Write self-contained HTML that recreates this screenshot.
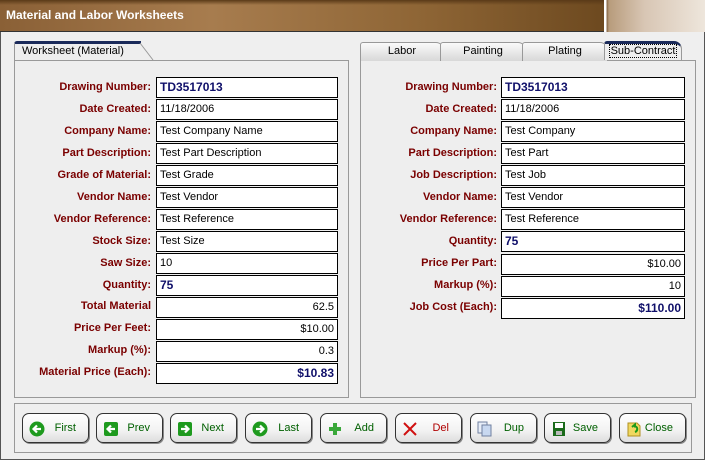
<!DOCTYPE html><html><head><style>
*{margin:0;padding:0;box-sizing:border-box}
body{width:705px;height:460px;overflow:hidden;background:#efefef;font-family:"Liberation Sans",sans-serif;font-size:11px;position:relative}
.win{position:absolute;left:0;top:0;width:705px;height:460px;border:1px solid #555;border-top:none}
.title{position:absolute;left:0;top:0;width:705px;height:32px;background:linear-gradient(90deg,#8a6036 0%,#a77c4e 30%,#8e6535 60%,#6e4a20 85%);border-bottom:1px solid #333}
.title:before{content:"";position:absolute;left:0;top:0;right:0;height:5px;background:linear-gradient(#5a3a18,rgba(0,0,0,0))}
.title .r{position:absolute;left:604px;top:0;width:101px;height:32px;background:linear-gradient(90deg,#fff 0,#fff 2px,#8a6a48 3px,#b89c7c 5px,#d8c6b4 40%,#eee6dc 100%)}
.title span{position:absolute;left:6px;top:8px;color:#fff;font-weight:bold;font-size:12px}
.panel{position:absolute;border:1px solid #999;background:#eeeeee}
.tab{position:absolute;height:19px;border:1px solid #999;border-bottom:none;background:linear-gradient(#fafafa,#d8d8d8);text-align:center;line-height:17px;font-size:11px;border-radius:3px 8px 0 0;white-space:nowrap}
.tab.a{background:#eee;border-top:3px solid #1a2a5a;line-height:14px}
.lbl{position:absolute;text-align:right;color:#7a0000;font-weight:bold;font-size:11px;line-height:20px}
.in{position:absolute;height:21px;border:1px solid #000;background:#fff;padding:0 3px;line-height:19px;font-size:11px;white-space:nowrap}
.in.b{color:#10106a;font-weight:bold;font-size:12px}
.in.r{text-align:right}
.btnbox{position:absolute;left:14px;top:403px;width:678px;height:50px;border:1px solid #999}
.btn{position:absolute;top:413px;width:67px;height:30px;border:1px solid #333;border-radius:7px;background:linear-gradient(#fff,#f2f2f2 60%,#ddd);box-shadow:1px 1px 0 #888;color:#006000;font-size:11px;line-height:28px}
.btn i{position:absolute;left:6px;top:6px;width:16px;height:16px}
.btn b{font-weight:normal;position:absolute;right:12px}
</style></head><body>
<div class="win"></div>
<div class="title"><div class="r"></div><span>Material and Labor Worksheets</span></div>

<div class="panel" style="left:14px;top:60px;width:335px;height:338px"></div>
<div class="tab a" style="left:14px;top:41px;width:126px;text-align:left;padding-left:7px;border-radius:3px 0 0 0;border-right:none">Worksheet (Material)</div>
<svg style="position:absolute;left:138px;top:41px" width="16" height="20"><path d="M0 2 L2 2 L15 19 L0 19Z" fill="#eee"/><path d="M0 1.5 L3 1.5" stroke="#1a2a5a" stroke-width="3"/><path d="M2 2 L15 19" stroke="#999" fill="none"/></svg>

<div class="panel" style="left:360px;top:60px;width:336px;height:338px"></div>
<div class="tab" style="left:360px;top:42px;width:84px">Labor</div>
<div class="tab" style="left:440px;top:42px;width:86px">Painting</div>
<div class="tab" style="left:522px;top:42px;width:86px">Plating</div>
<div class="tab a" style="left:604px;top:41px;width:78px"><span style="border:1px dotted #000;padding:0 1px">Sub-Contract</span></div>

<div class="lbl" style="left:20px;width:131px;top:77px">Drawing Number:</div><div class="in b" style="left:156px;top:77px;width:182px">TD3517013</div>
<div class="lbl" style="left:20px;width:131px;top:99px">Date Created:</div><div class="in" style="left:156px;top:99px;width:182px">11/18/2006</div>
<div class="lbl" style="left:20px;width:131px;top:121px">Company Name:</div><div class="in" style="left:156px;top:121px;width:182px">Test Company Name</div>
<div class="lbl" style="left:20px;width:131px;top:143px">Part Description:</div><div class="in" style="left:156px;top:143px;width:182px">Test Part Description</div>
<div class="lbl" style="left:20px;width:131px;top:165px">Grade of Material:</div><div class="in" style="left:156px;top:165px;width:182px">Test Grade</div>
<div class="lbl" style="left:20px;width:131px;top:187px">Vendor Name:</div><div class="in" style="left:156px;top:187px;width:182px">Test Vendor</div>
<div class="lbl" style="left:20px;width:131px;top:209px">Vendor Reference:</div><div class="in" style="left:156px;top:209px;width:182px">Test Reference</div>
<div class="lbl" style="left:20px;width:131px;top:231px">Stock Size:</div><div class="in" style="left:156px;top:231px;width:182px">Test Size</div>
<div class="lbl" style="left:20px;width:131px;top:253px">Saw Size:</div><div class="in" style="left:156px;top:253px;width:182px">10</div>
<div class="lbl" style="left:20px;width:131px;top:275px">Quantity:</div><div class="in b" style="left:156px;top:275px;width:182px">75</div>
<div class="lbl" style="left:20px;width:131px;top:296px">Total Material</div><div class="in r" style="left:156px;top:297px;width:182px">62.5</div>
<div class="lbl" style="left:20px;width:131px;top:318px">Price Per Feet:</div><div class="in r" style="left:156px;top:319px;width:182px">$10.00</div>
<div class="lbl" style="left:20px;width:131px;top:340px">Markup (%):</div><div class="in r" style="left:156px;top:341px;width:182px">0.3</div>
<div class="lbl" style="left:20px;width:131px;top:362px">Material Price (Each):</div><div class="in r b" style="left:156px;top:363px;width:182px">$10.83</div>

<div class="lbl" style="left:366px;width:131px;top:77px">Drawing Number:</div><div class="in b" style="left:501px;top:77px;width:184px">TD3517013</div>
<div class="lbl" style="left:366px;width:131px;top:99px">Date Created:</div><div class="in" style="left:501px;top:99px;width:184px">11/18/2006</div>
<div class="lbl" style="left:366px;width:131px;top:121px">Company Name:</div><div class="in" style="left:501px;top:121px;width:184px">Test Company</div>
<div class="lbl" style="left:366px;width:131px;top:143px">Part Description:</div><div class="in" style="left:501px;top:143px;width:184px">Test Part</div>
<div class="lbl" style="left:366px;width:131px;top:165px">Job Description:</div><div class="in" style="left:501px;top:165px;width:184px">Test Job</div>
<div class="lbl" style="left:366px;width:131px;top:187px">Vendor Name:</div><div class="in" style="left:501px;top:187px;width:184px">Test Vendor</div>
<div class="lbl" style="left:366px;width:131px;top:209px">Vendor Reference:</div><div class="in" style="left:501px;top:209px;width:184px">Test Reference</div>
<div class="lbl" style="left:366px;width:131px;top:231px">Quantity:</div><div class="in b" style="left:501px;top:231px;width:184px">75</div>
<div class="lbl" style="left:366px;width:131px;top:253px">Price Per Part:</div><div class="in r" style="left:501px;top:254px;width:184px">$10.00</div>
<div class="lbl" style="left:366px;width:131px;top:275px">Markup (%):</div><div class="in r" style="left:501px;top:276px;width:184px">10</div>
<div class="lbl" style="left:366px;width:131px;top:297px">Job Cost (Each):</div><div class="in r b" style="left:501px;top:298px;width:184px">$110.00</div>

<div class="btnbox"></div>
<div class="btn" style="left:22px"><i><svg width="16" height="16"><circle cx="8" cy="8" r="7.5" fill="#1e9a1e"/><path d="M12 8H5M8 4.5L4.5 8 8 11.5" stroke="#fff" stroke-width="2.2" fill="none"/></svg></i><b>First</b></div>
<div class="btn" style="left:96px"><i><svg width="16" height="16"><rect x="1" y="1" width="14" height="14" rx="2" fill="#1e9a1e"/><path d="M12 8H5M8 4.5L4.5 8 8 11.5" stroke="#fff" stroke-width="2.2" fill="none"/></svg></i><b>Prev</b></div>
<div class="btn" style="left:170px"><i><svg width="16" height="16"><rect x="1" y="1" width="14" height="14" rx="2" fill="#1e9a1e"/><path d="M4 8H11M8 4.5L11.5 8 8 11.5" stroke="#fff" stroke-width="2.2" fill="none"/></svg></i><b>Next</b></div>
<div class="btn" style="left:245px"><i><svg width="16" height="16"><circle cx="8" cy="8" r="7.5" fill="#1e9a1e"/><path d="M4 8H11M8 4.5L11.5 8 8 11.5" stroke="#fff" stroke-width="2.2" fill="none"/></svg></i><b>Last</b></div>
<div class="btn" style="left:320px"><i><svg width="16" height="16"><path d="M8 2V14M2 8H14" stroke="#3aa83a" stroke-width="4"/></svg></i><b>Add</b></div>
<div class="btn" style="left:395px;color:#b00000"><i><svg width="16" height="16"><path d="M2 2L14 14M14 2L2 14" stroke="#d01010" stroke-width="2"/></svg></i><b>Del</b></div>
<div class="btn" style="left:470px"><i><svg width="16" height="16"><rect x="1" y="1" width="9" height="11" fill="#e8eef8" stroke="#7080a0"/><rect x="5" y="4" width="9" height="11" fill="#c8d8f0" stroke="#7080a0"/></svg></i><b>Dup</b></div>
<div class="btn" style="left:544px"><i><svg width="16" height="16"><rect x="2" y="1" width="12" height="14" fill="#1a6a1a"/><rect x="4" y="2" width="8" height="5" fill="#fff"/><rect x="5" y="10" width="6" height="4" fill="#bbb"/></svg></i><b>Save</b></div>
<div class="btn" style="left:619px"><i><svg width="16" height="16"><path d="M2 2H11L14 5V15H2Z" fill="#f0d860" stroke="#b09020"/><path d="M6 6L9 3.5V5.5C12 5.5 12 10 9 11" stroke="#1a9a1a" stroke-width="2" fill="none"/></svg></i><b>Close</b></div>
</body></html>
